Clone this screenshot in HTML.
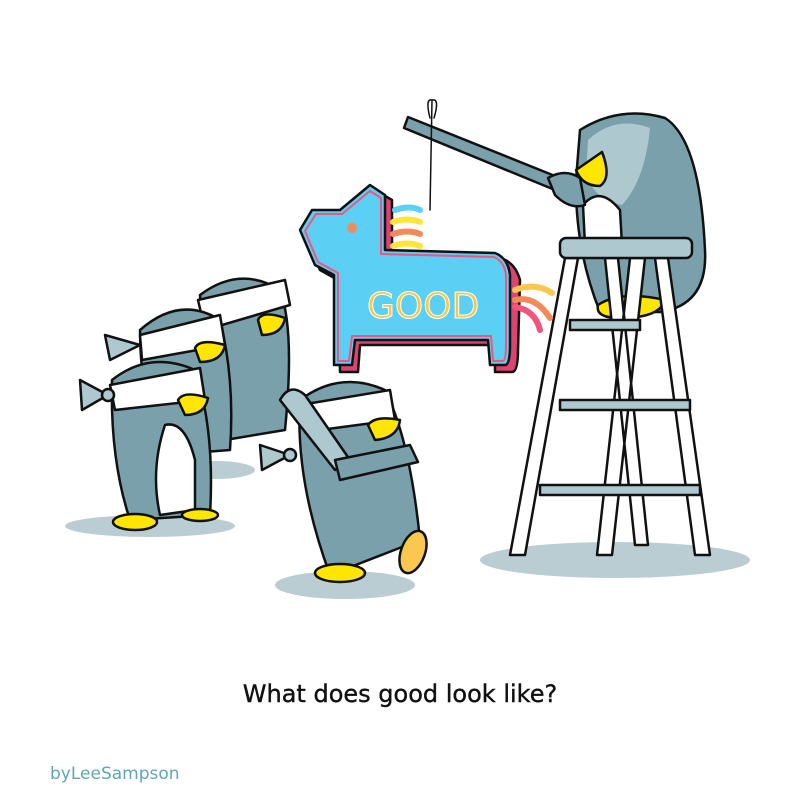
<!DOCTYPE html>
<html><head><meta charset="utf-8"><style>
html,body{margin:0;padding:0;background:#fff;width:800px;height:800px;overflow:hidden}
.cap{position:absolute;left:0;width:800px;top:680px;text-align:center;font:24px "DejaVu Sans","Liberation Sans",sans-serif;color:#111;-webkit-text-stroke:0.4px #111}
.by{position:absolute;left:50px;top:764px;font:17px "DejaVu Sans","Liberation Sans",sans-serif;color:#5fa5ba}
</style></head><body>
<svg width="800" height="800" viewBox="0 0 800 800" style="position:absolute;left:0;top:0">
<g fill="#b9cdd3">
<ellipse cx="615" cy="560" rx="135" ry="18"/>
<ellipse cx="150" cy="526" rx="85" ry="11"/>
<ellipse cx="215" cy="470" rx="40" ry="9"/>
<ellipse cx="345" cy="585" rx="70" ry="14"/>
</g>
<g stroke="#111" stroke-width="2.5" stroke-linejoin="round" stroke-linecap="round">
<!-- right penguin -->
<path d="M580 130 Q620 105 665 118 Q700 140 705 250 Q708 305 660 312 L600 312 Q575 250 576 180 Z" fill="#7aa0ab"/>
<path d="M588 140 Q615 115 650 128 Q645 180 622 205 Q595 200 586 175 Z" fill="#aec8d0" stroke="none"/>
<path d="M583 205 Q600 185 620 210 L622 245 L585 245 Z" fill="#fff"/>
<path d="M576 170 L602 152 Q612 178 600 186 Q582 186 576 170 Z" fill="#ffe600"/>
<path d="M598 305 Q620 290 665 300 Q660 318 620 318 Q595 318 598 305Z" fill="#ffe600"/>
<!-- stick -->
<path d="M408 117 L560 178 L555 190 L404 128 Z" fill="#7aa0ab"/>
<path d="M548 178 Q565 168 580 178 L585 205 Q570 210 555 195 Z" fill="#7aa0ab"/>
<!-- ladder -->
<path d="M565 258 L578 258 L525 555 L510 555 Z M630 258 L645 258 L612 555 L597 555 Z M655 258 L668 258 L710 555 L695 555 Z M605 258 L618 258 L648 545 L635 545 Z" fill="#fff"/>
<path d="M570 320 L640 320 L640 330 L570 330Z M560 400 L690 400 L690 410 L560 410Z M540 485 L700 485 L700 495 L540 495Z" fill="#aec8d0"/>
<rect x="560" y="238" width="132" height="20" rx="6" fill="#aec8d0"/>
<!-- string -->
<path d="M432 100 L430 210" fill="none" stroke-width="1.5"/>
<path d="M430 118 Q425 98 432 100 Q440 98 434 118" fill="none" stroke-width="1.5"/>
<!-- pinata -->
<path d="M320 215 L345 215 L375 190 L392 200 L392 255 L500 258 Q515 262 520 280 L518 350 Q518 372 512 372 L495 372 L495 345 L360 345 L358 372 L340 372 L338 280 L320 270 L305 235 Z" fill="#d94470"/>
<path d="M312 210 L340 210 L370 185 L385 195 L385 250 L495 253 Q508 258 510 275 L510 345 Q510 365 505 365 L490 365 L488 340 L355 340 L352 365 L334 365 L334 275 L315 265 L300 230 Z" fill="#5ccff4"/>
<path d="M316 214 L342 214 L370 191 L381 198 L381 254 L494 257 Q505 262 506 276 L506 344 Q506 361 503 361 L493 361 L491 336 L352 336 L349 361 L338 361 L338 273 L318 262 L305 231 Z" fill="none" stroke="#f0557e" stroke-width="2"/>
<g fill="none" stroke-width="6">
<path d="M395 210 Q410 205 420 210" stroke="#5ccff4"/>
<path d="M393 222 Q408 217 420 222" stroke="#ffe53a"/>
<path d="M393 234 Q408 229 420 234" stroke="#f38a5a"/>
<path d="M393 246 Q408 241 420 246" stroke="#ffe53a"/>
<path d="M515 290 Q535 282 552 293" stroke="#fbc74f"/>
<path d="M515 300 Q535 295 550 318" stroke="#f38a5a"/>
<path d="M515 307 Q535 310 540 330" stroke="#f0557e"/>
</g>
<circle cx="352" cy="228" r="5" fill="#f38a5a" stroke="none"/>
<!-- left penguins -->
<path d="M200 295 Q240 265 280 290 Q295 330 285 430 L225 440 Q205 380 200 295Z" fill="#7aa0ab"/>
<path d="M198 300 L285 280 L290 305 L205 330Z" fill="#fff"/>
<path d="M258 320 Q262 310 285 318 Q282 335 262 335Z" fill="#ffe600"/>
<path d="M140 330 Q180 295 220 320 Q235 380 230 450 L165 455 Q140 400 140 330Z" fill="#7aa0ab"/>
<path d="M140 335 L220 315 L225 345 L142 360Z" fill="#fff"/>
<path d="M195 348 Q200 338 225 345 Q222 362 200 362Z" fill="#ffe600"/>
<path d="M112 380 Q150 350 195 370 Q215 430 210 515 L130 520 Q110 460 112 380Z" fill="#7aa0ab"/>
<path d="M110 385 L200 368 L205 400 L115 410Z" fill="#fff"/>
<path d="M165 425 Q185 420 195 460 L195 510 L160 515 Q150 470 165 425Z" fill="#fff"/>
<path d="M178 400 Q184 390 208 398 Q205 415 185 415Z" fill="#ffe600"/>
<ellipse cx="135" cy="522" rx="22" ry="8" fill="#ffe600"/>
<ellipse cx="200" cy="515" rx="18" ry="6" fill="#ffe600"/>
<path d="M80 380 L108 395 L82 410 Z M105 335 L140 345 L110 360Z" fill="#aec8d0"/>
<circle cx="108" cy="395" r="6" fill="#aec8d0"/>
<!-- front penguin -->
<path d="M300 400 Q340 370 385 390 Q410 440 420 540 L330 575 Q295 480 300 400Z" fill="#7aa0ab"/>
<path d="M300 405 L390 390 L395 420 L305 432Z" fill="#fff"/>
<path d="M368 425 Q375 415 400 420 Q398 438 375 440Z" fill="#ffe600"/>
<path d="M280 400 Q290 382 305 395 L350 460 L335 470 Z" fill="#aec8d0"/>
<path d="M335 460 L410 445 L418 462 L340 480Z" fill="#7aa0ab"/>
<ellipse cx="340" cy="573" rx="25" ry="9" fill="#ffe600"/>
<ellipse cx="413" cy="552" rx="12" ry="22" transform="rotate(20 413 552)" fill="#fbc74f"/>
<path d="M260 445 L290 455 L262 470 Z" fill="#aec8d0"/>
<circle cx="290" cy="455" r="6" fill="#aec8d0"/>
</g>
<text x="367" y="318" font-family="DejaVu Sans,Liberation Sans,sans-serif" font-size="36" fill="#f8c84e" stroke="#fff" stroke-width="1">GOOD</text>
</svg>
<div class="cap">What does good look like?</div>
<div class="by">byLeeSampson</div>
</body></html>
